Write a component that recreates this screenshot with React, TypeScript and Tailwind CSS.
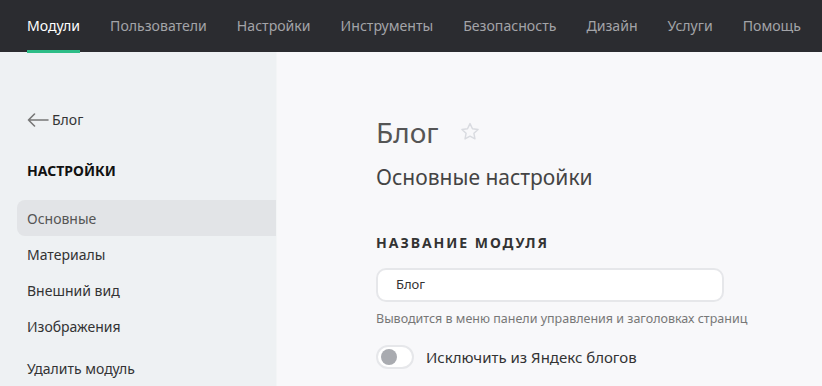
import React from "react";

const navItems = ["Модули", "Пользователи", "Настройки", "Инструменты", "Безопасность", "Дизайн", "Услуги", "Помощь"];

export default function App() {
  return (
    <div className="w-[822px] h-[386px] overflow-hidden flex flex-col bg-[#f8f8fa]" style={{ fontFamily: '"Noto Sans", "Open Sans", sans-serif' }}>
      <nav className="h-[52px] shrink-0 bg-[#2b2c30] flex items-stretch pl-[27px] gap-[30px]">
        {navItems.map((n, i) => (
          <div key={n} className={`relative flex items-center text-[14.1px] ${i === 0 ? "text-white" : "text-[#a3a4a8]"}`}>
            {n}
            {i === 0 && <div className="absolute left-0 right-0 bottom-[-1px] h-[3px] bg-[#2dbd87]" />}
          </div>
        ))}
      </nav>
      <div className="flex flex-1">
        <aside className="w-[277px] shrink-0 bg-[#eef1f3] border-r border-[#f3f5f6] pl-[17px] pt-[57px]">
          <div className="flex items-center gap-[3px] pl-[10px] text-[14px] text-[#333]">
            <svg width="22" height="14" viewBox="0 0 22 14" fill="none" stroke="#777" strokeWidth="1.6" strokeLinecap="round" strokeLinejoin="round">
              <path d="M21 7H1.5M7.5 1L1.5 7l6 6" />
            </svg>
            <span>Блог</span>
          </div>
          <div className="pl-[10px] mt-[30px] text-[14px] font-bold text-[#111]">НАСТРОЙКИ</div>
          <div className="mt-[19px] flex flex-col">
            <div className="h-[36px] flex items-center pl-[10px] rounded-l-[8px] bg-[#e2e4e7] text-[14px] text-[#555]">Основные</div>
            <div className="h-[36px] flex items-center pl-[10px] text-[14px] text-[#333]">Материалы</div>
            <div className="h-[36px] flex items-center pl-[10px] text-[14px] text-[#333]">Внешний вид</div>
            <div className="h-[36px] flex items-center pl-[10px] text-[14px] text-[#333]">Изображения</div>
            <div className="h-[36px] mt-[6px] flex items-center pl-[10px] text-[14px] text-[#333]">Удалить модуль</div>
          </div>
        </aside>
        <main className="flex-1 pl-[99px] pt-[61px]">
          <div className="flex items-center gap-[20px]">
            <h1 className="text-[28px] leading-[38px] text-[#555] font-normal">Блог</h1>
            <svg width="22" height="22" viewBox="0 0 24 24" fill="none" stroke="#d9dbe0" strokeWidth="1.6" strokeLinejoin="round">
              <path d="M12 2.8l2.7 5.6 6.1.8-4.5 4.2 1.1 6.1L12 16.6l-5.4 2.9 1.1-6.1-4.5-4.2 6.1-.8z" />
            </svg>
          </div>
          <h2 className="mt-[12px] text-[21px] leading-[28px] text-[#444]">Основные настройки</h2>
          <div className="mt-[41px] text-[14px] font-bold tracking-[0.14em] text-[#333]">НАЗВАНИЕ МОДУЛЯ</div>
          <div className="mt-[15px] w-[348px] h-[34px] rounded-[10px] border-2 border-[#e6e7ea] bg-white flex items-center pl-[18px] text-[13px] text-[#333]">Блог</div>
          <div className="mt-[8px] text-[12.5px] text-[#777]">Выводится в меню панели управления и заголовках страниц</div>
          <div className="mt-[16px] flex items-center gap-[12px]">
            <div className="w-[38px] h-[24px] rounded-full border-2 border-[#e6e7ea] bg-white flex items-center pl-[3px]">
              <div className="w-[16px] h-[16px] rounded-full bg-[#a9abb0]" />
            </div>
            <span className="text-[15px] text-[#333]">Исключить из Яндекс блогов</span>
          </div>
        </main>
      </div>
    </div>
  );
}
